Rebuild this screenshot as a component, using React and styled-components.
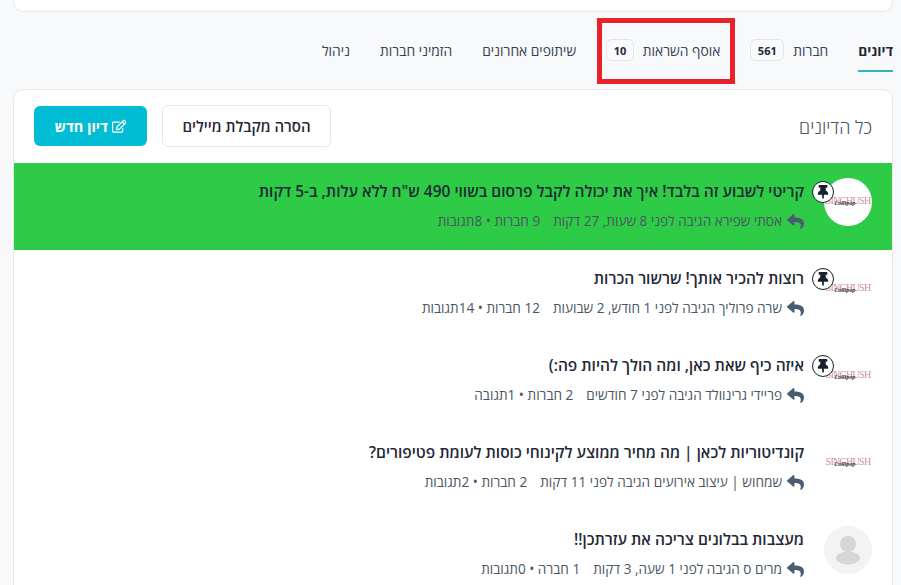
import React from 'react';
import styled, { createGlobalStyle } from 'styled-components';
import { FaThumbtack, FaReply, FaRegEdit } from 'react-icons/fa';

const GlobalStyle = createGlobalStyle`
  html, body {
    margin: 0;
    height: 585px;
    overflow: hidden;
    background: #f8f9fb;
  }
  * { box-sizing: border-box; }
`;

const tabs = [
  { label: 'דיונים', active: true },
  { label: 'חברות', count: 561 },
  { label: 'אוסף השראות', count: 10 },
  { label: 'שיתופים אחרונים' },
  { label: 'הזמיני חברות' },
  { label: 'ניהול' }
];

const topics = [
  {
    title: 'קריטי לשבוע זה בלבד! איך את יכולה לקבל פרסום בשווי 490 ש"ח ללא עלות, ב-5 דקות',
    reply: 'אסתי שפירא הגיבה לפני 8 שעות, 27 דקות',
    stats: '9 חברות • 8תגובות',
    pinned: true,
    highlight: true,
    avatar: 'logo'
  },
  {
    title: 'רוצות להכיר אותך! שרשור הכרות',
    reply: 'שרה פרוליך הגיבה לפני 1 חודש, 2 שבועות',
    stats: '12 חברות • 14תגובות',
    pinned: true,
    avatar: 'logo'
  },
  {
    title: 'איזה כיף שאת כאן, ומה הולך להיות פה:)',
    reply: 'פריידי גרינוולד הגיבה לפני 7 חודשים',
    stats: '2 חברות • 1תגובה',
    pinned: true,
    avatar: 'logo'
  },
  {
    title: 'קונדיטוריות לכאן | מה מחיר ממוצע לקינוחי כוסות לעומת פטיפורים?',
    reply: 'שמחוש | עיצוב אירועים הגיבה לפני 11 דקות',
    stats: '2 חברות • 2תגובות',
    avatar: 'logo'
  },
  {
    title: 'מעצבות בבלונים צריכה את עזרתכן!!',
    reply: 'מרים ס הגיבה לפני 1 שעה, 3 דקות',
    stats: '1 חברה • 0תגובות',
    avatar: 'person'
  }
];

const Page = styled.div`
  position: relative;
  direction: rtl;
  padding: 0 8px 0 8px;
  font-family: 'Open Sans', 'Noto Sans', 'Liberation Sans', sans-serif;
  color: #1f2937;
`;

const TopCard = styled.div`
  height: 12px;
  margin-left: 5px;
  background: #fff;
  border: 1px solid #e6e8ec;
  border-top: 0;
  border-radius: 0 0 10px 10px;
`;

const TabBar = styled.nav`
  display: flex;
  align-items: stretch;
  gap: 30px;
  height: 60px;
  margin: 0 0 17px 5px;
`;

const Tab = styled.div`
  display: flex;
  align-items: center;
  gap: 9px;
  padding-top: 18px;
  height: 60px;
  font-size: 13.8px;
  font-weight: ${p => (p.$active ? 700 : 400)};
  color: ${p => (p.$active ? '#1f2937' : '#374151')};
  border-bottom: 2px solid ${p => (p.$active ? '#2eb4c0' : 'transparent')};
`;

const Badge = styled.span`
  display: inline-flex;
  align-items: center;
  justify-content: center;
  height: 22px;
  padding: 0 6.5px;
  font-size: 11px;
  font-weight: 700;
  background: #f9fafb;
  border: 1px solid #e2e4e8;
  border-radius: 6px;
  color: #1f2937;
`;

const Panel = styled.section`
  margin-left: 5px;
  background: #fff;
  border: 1px solid #e6e8ec;
  border-radius: 10px 10px 0 0;
`;

const PanelHeader = styled.header`
  display: flex;
  align-items: flex-start;
  justify-content: space-between;
  height: 73px;
  padding: 15px 20px 0;
`;

const PanelTitle = styled.h2`
  align-self: center;
  margin: -15px 0 0;
  font-size: 18px;
  font-weight: 300;
  color: #4b5563;
`;

const Actions = styled.div`
  display: flex;
  align-items: center;
  gap: 15px;
`;

const OutlineButton = styled.button`
  height: 42px;
  width: 169px;
  font: 600 15px 'Open Sans', 'Noto Sans', sans-serif;
  color: #1f2937;
  background: #fff;
  border: 1px solid #e6e8ec;
  border-radius: 6px;
`;

const PrimaryButton = styled.button`
  display: flex;
  align-items: center;
  justify-content: center;
  gap: 4px;
  height: 40px;
  width: 113px;
  font: 700 14.5px 'Open Sans', 'Noto Sans', sans-serif;
  color: #fff;
  background: #00bcd4;
  border: 0;
  border-radius: 6px;
`;

const Row = styled.article`
  display: flex;
  align-items: flex-start;
  gap: 20px;
  height: 87px;
  padding: 15px 20px 0;
  background: ${p => (p.$highlight ? '#2ecc46' : 'transparent')};
`;

const AvatarWrap = styled.div`
  position: relative;
  flex: none;
  width: 48px;
  height: 48px;
`;

const Avatar = styled.div`
  display: flex;
  align-items: center;
  justify-content: center;
  width: 48px;
  height: 48px;
  border-radius: 50%;
  background: ${p => (p.$person ? '#f3f3f3' : '#fff')};
`;

const LogoMark = styled.div`
  position: relative;
  margin-top: -3px;
  font: 400 10px 'Liberation Serif', serif;
  letter-spacing: -0.7px;
  color: #d08f9c;
  direction: ltr;
  white-space: nowrap;
`;

const LogoScript = styled.span`
  position: absolute;
  top: 5px;
  left: 9px;
  font: italic 700 6px 'Liberation Serif', serif;
  letter-spacing: 0;
  color: #333;
`;

const PinBadge = styled.span`
  position: absolute;
  top: 3px;
  right: 38px;
  display: flex;
  align-items: center;
  justify-content: center;
  width: 22px;
  height: 22px;
  font-size: 14px;
  color: #17202c;
  background: #fff;
  border: 1.5px solid #17202c;
  border-radius: 50%;
`;

const Body = styled.div`
  display: flex;
  flex-direction: column;
  gap: 11px;
  padding-top: 3px;
`;

const Title = styled.h3`
  margin: 0;
  font-size: 15.5px;
  line-height: 20px;
  font-weight: 600;
  color: #1f2937;
`;

const Meta = styled.div`
  display: flex;
  align-items: center;
  gap: 13px;
  font-size: 13.6px;
  line-height: 18px;
  color: #4b5563;
`;

const ReplyLine = styled.span`
  display: inline-flex;
  align-items: center;
  gap: 5px;
  svg {
    font-size: 17px;
    color: #4a5d70;
  }
`;

const Annotation = styled.div`
  position: absolute;
  left: 597px;
  top: 18px;
  width: 138px;
  height: 66px;
  border: 5px solid #e8212b;
  pointer-events: none;
`;

const PersonIcon = () => (
  <svg width="48" height="48" viewBox="0 0 48 48" fill="#d6d6d6">
    <circle cx="24" cy="18" r="8" />
    <ellipse cx="24" cy="32" rx="12" ry="6.5" />
  </svg>
);

const TopicRow = ({ title, reply, stats, pinned, highlight, avatar }) => (
  <Row $highlight={highlight}>
    <AvatarWrap>
      <Avatar $person={avatar === 'person'}>
        {avatar === 'person' ? (
          <PersonIcon />
        ) : (
          <LogoMark>
            SINGHUSH
            <LogoScript>Lollipop</LogoScript>
          </LogoMark>
        )}
      </Avatar>
      {pinned && (
        <PinBadge>
          <FaThumbtack />
        </PinBadge>
      )}
    </AvatarWrap>
    <Body>
      <Title>{title}</Title>
      <Meta>
        <ReplyLine>
          <FaReply />
          {reply}
        </ReplyLine>
        <span>{stats}</span>
      </Meta>
    </Body>
  </Row>
);

const App = () => (
  <Page>
    <GlobalStyle />
    <TopCard />
    <TabBar>
      {tabs.map(tab => (
        <Tab key={tab.label} $active={tab.active}>
          {tab.label}
          {tab.count && <Badge>{tab.count}</Badge>}
        </Tab>
      ))}
    </TabBar>
    <Panel>
      <PanelHeader>
        <PanelTitle>כל הדיונים</PanelTitle>
        <Actions>
          <OutlineButton>הסרה מקבלת מיילים</OutlineButton>
          <PrimaryButton>
            <FaRegEdit />
            דיון חדש
          </PrimaryButton>
        </Actions>
      </PanelHeader>
      {topics.map(topic => (
        <TopicRow key={topic.title} {...topic} />
      ))}
    </Panel>
    <Annotation />
  </Page>
);

export default App;
